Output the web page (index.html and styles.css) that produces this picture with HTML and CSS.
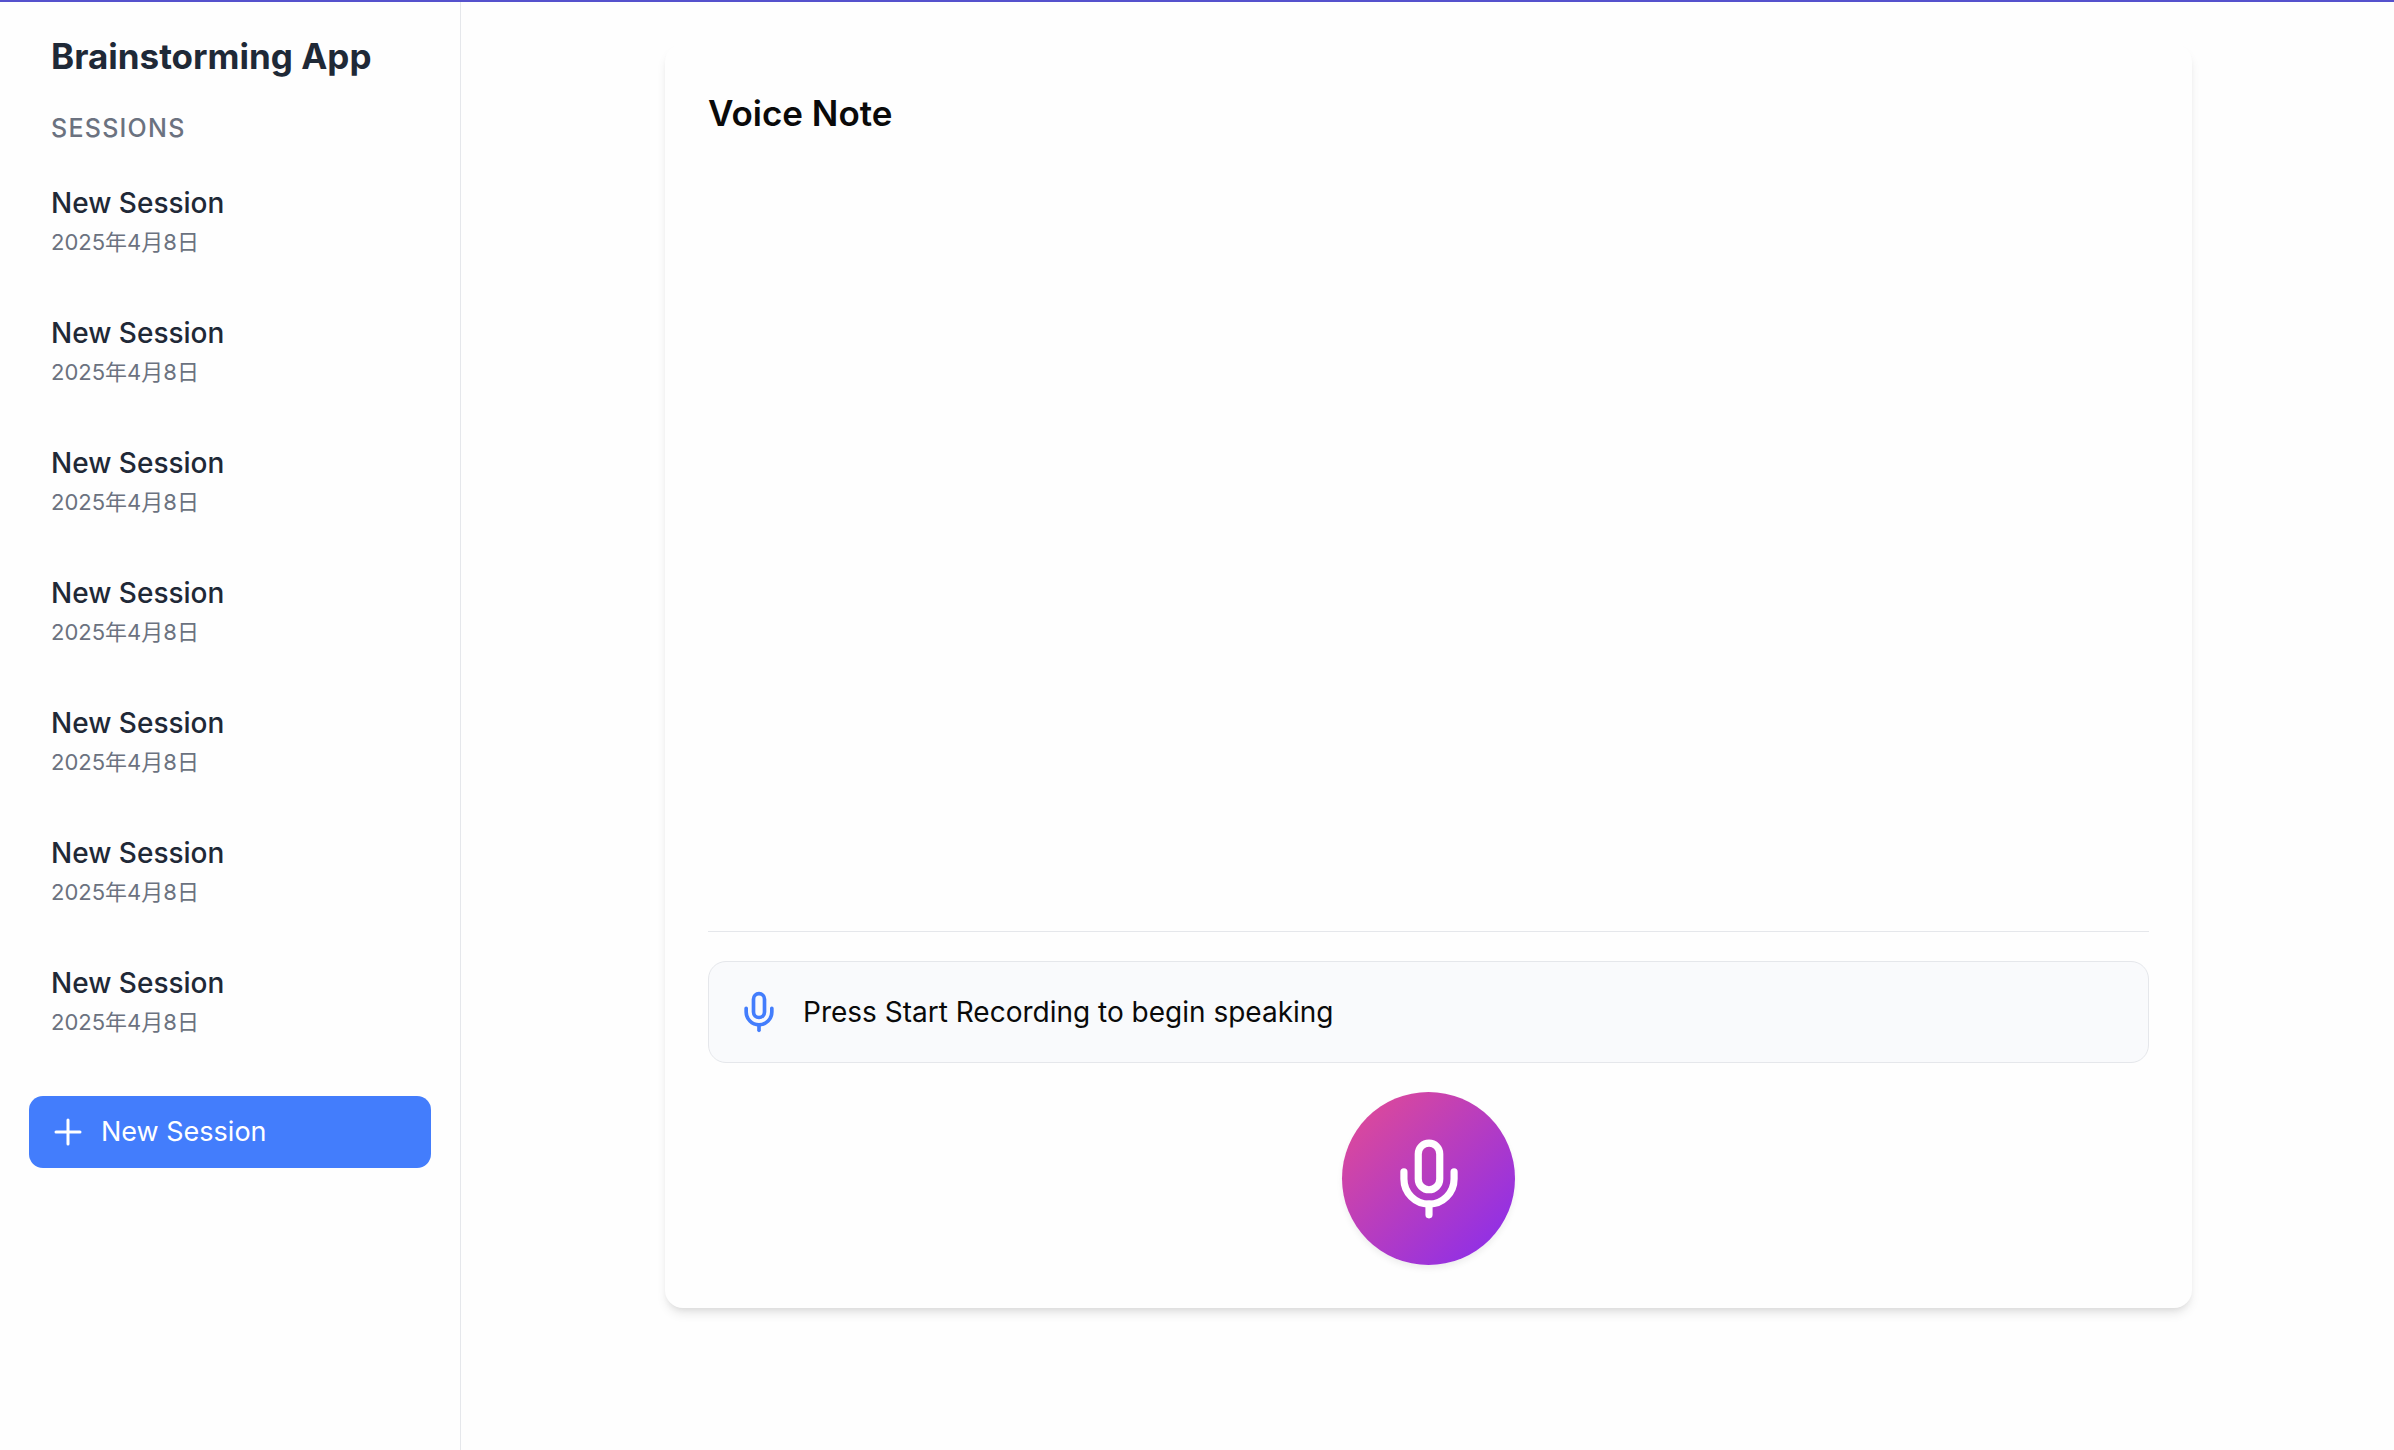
FILE: index.html
```html
<!DOCTYPE html>
<html lang="en">
<head>
<meta charset="utf-8">
<meta name="viewport" content="width=device-width, initial-scale=1">
<title>Brainstorming App</title>
<link rel="stylesheet" href="styles.css">
</head>
<body>
<div class="app">
  <aside class="sidebar">
    <h1 class="brand">Brainstorming App</h1>
    <h2 class="section-label">SESSIONS</h2>
    <nav class="sessions" aria-label="Sessions">
      <a class="session" href="#s1"><span class="session-name">New Session</span><span class="session-date">2025年4月8日</span></a>
      <a class="session" href="#s2"><span class="session-name">New Session</span><span class="session-date">2025年4月8日</span></a>
      <a class="session" href="#s3"><span class="session-name">New Session</span><span class="session-date">2025年4月8日</span></a>
      <a class="session" href="#s4"><span class="session-name">New Session</span><span class="session-date">2025年4月8日</span></a>
      <a class="session" href="#s5"><span class="session-name">New Session</span><span class="session-date">2025年4月8日</span></a>
      <a class="session" href="#s6"><span class="session-name">New Session</span><span class="session-date">2025年4月8日</span></a>
      <a class="session" href="#s7"><span class="session-name">New Session</span><span class="session-date">2025年4月8日</span></a>
    </nav>
    <button class="new-session" type="button">
      <svg class="icon-plus" viewBox="0 0 24 24" aria-hidden="true"><path d="M12 4v16m8-8H4"/></svg>
      New Session
    </button>
  </aside>
  <main class="main">
    <section class="card">
      <h2 class="card-title">Voice Note</h2>
      <div class="transcript"></div>
      <div class="recorder">
        <div class="status">
          <svg class="icon-mic" viewBox="0 0 24 24" aria-hidden="true"><path d="M12 2a3 3 0 0 0-3 3v7a3 3 0 0 0 6 0V5a3 3 0 0 0-3-3Z"/><path d="M19 10v2a7 7 0 0 1-14 0v-2"/><path d="M12 19v3"/></svg>
          <p class="status-text">Press Start Recording to begin speaking</p>
        </div>
        <button class="record" type="button" aria-label="Start Recording">
          <svg class="icon-record" viewBox="0 0 24 24" aria-hidden="true"><path d="M12 2a3 3 0 0 0-3 3v7a3 3 0 0 0 6 0V5a3 3 0 0 0-3-3Z"/><path d="M19 10v2a7 7 0 0 1-14 0v-2"/><path d="M12 19v3"/></svg>
        </button>
      </div>
    </section>
  </main>
</div>
</body>
</html>
```
FILE: styles.css
```css
*, *::before, *::after { box-sizing: border-box; }

body, h1, h2, p { margin: 0; }

body {
  background: #fefefe;
  color: #0a0a0a;
  font-family: Inter, "Noto Sans CJK JP", sans-serif;
  font-size: 28px;
  line-height: 44px;
}

button { font: inherit; border: 0; cursor: pointer; }

svg {
  flex: none;
  fill: none;
  stroke: currentColor;
  stroke-width: 2;
  stroke-linecap: round;
  stroke-linejoin: round;
}

.app {
  display: flex;
  min-height: 100vh;
  border-top: 2px solid #5552cd;
}

/* Sidebar */
.sidebar {
  flex: none;
  width: 461px;
  padding: 29px;
  border-right: 1px solid #e5e7eb;
}

.brand {
  padding: 0 22px;
  color: #1f2937;
  font-size: 35px;
  font-weight: 700;
  line-height: 50px;
}

.section-label {
  padding: 29px 22px 0;
  color: #6b7280;
  font-size: 25px;
  font-weight: 500;
  line-height: 36px;
  letter-spacing: 0.05em;
}

.sessions {
  display: flex;
  flex-direction: column;
  gap: 26px;
  margin-top: 21px;
}

.session {
  display: flex;
  flex-direction: column;
  gap: 2px;
  padding: 14px 22px;
  text-decoration: none;
}

.session-name {
  color: #1f2937;
  font-weight: 500;
  line-height: 44px;
}

.session-date {
  color: #6b7280;
  font-size: 22px;
  line-height: 30px;
}

.new-session {
  display: flex;
  align-items: center;
  gap: 15px;
  width: 100%;
  height: 72px;
  margin-top: 45px;
  padding: 0 21px;
  border-radius: 14px;
  background: #437dfc;
  color: #fff;
  font-size: 27px;
}

.icon-plus { width: 36px; height: 36px; }

/* Voice note */
.main {
  flex: 1;
  padding: 42px 43px 42px 45px;
}

.card {
  display: flex;
  flex-direction: column;
  max-width: 1527px;
  height: calc(100vh - 186px);
  min-height: 640px;
  margin: 0 auto;
  padding: 43px;
  border-radius: 18px;
  background: #fefefe;
  box-shadow: 0 7px 11px -2px rgb(0 0 0 / 10%), 0 4px 7px -4px rgb(0 0 0 / 10%);
}

.card-title {
  font-size: 35px;
  font-weight: 600;
  line-height: 52px;
}

.transcript { flex: 1; }

.recorder {
  display: flex;
  flex-direction: column;
  align-items: center;
  gap: 29px;
  padding-top: 29px;
  border-top: 1px solid #e5e7eb;
}

.status {
  display: flex;
  align-items: center;
  gap: 22px;
  width: 100%;
  padding: 28px;
  border: 1px solid #e5e7eb;
  border-radius: 18px;
  background: #f9fafc;
}

.icon-mic { width: 44px; height: 44px; color: #437dfc; }

.record {
  display: grid;
  place-items: center;
  width: 173px;
  height: 173px;
  padding: 0;
  border-radius: 50%;
  background: linear-gradient(135deg, #e54c92, #862cf0);
  box-shadow: 0 4px 7px -1px rgb(0 0 0 / 8%);
  color: #fff;
}

.icon-record { width: 86px; height: 86px; }
```
